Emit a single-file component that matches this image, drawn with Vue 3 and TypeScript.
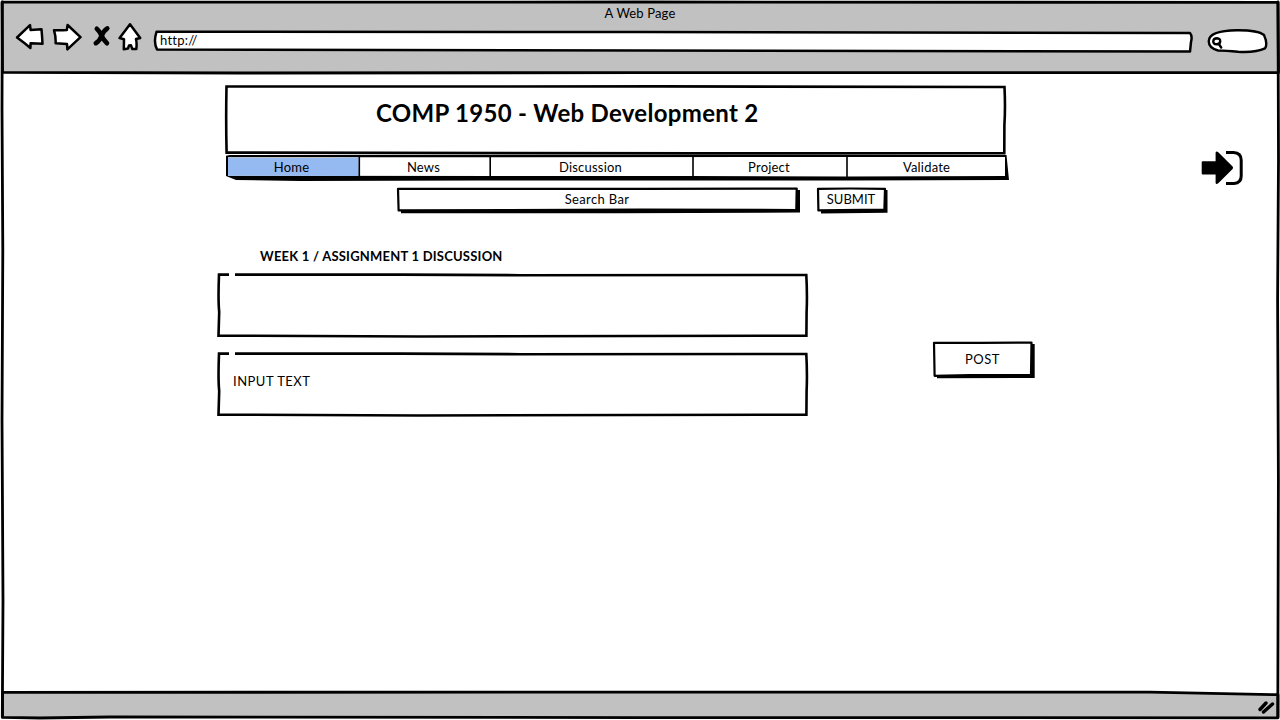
<script setup lang="ts">
interface Tab {
  label: string
  width: number
  active?: boolean
}

const tabs: Tab[] = [
  { label: 'Home', width: 133, active: true },
  { label: 'News', width: 131 },
  { label: 'Discussion', width: 203 },
  { label: 'Project', width: 154 },
  { label: 'Validate', width: 161 },
]

const posts: string[] = ['', 'INPUT TEXT']
</script>

<template>
  <div class="window">
    <header class="chrome">
      <svg class="sketch" viewBox="0 0 1280 74">
        <path d="M2 2.2 L640 2 L1278 2.4 L1278.5 72.6 L640 72.6 L240 73 L2.5 72.3 Z" class="gray" />
      </svg>
      <div class="title">A Web Page</div>
      <div class="toolbar">
        <svg class="icon back" width="30" height="28" viewBox="15 23 30 28">
          <path d="M17 37.5 L30 25.2 L30.6 30 L41.5 29.3 Q42.2 37 42.5 43.8 L30.6 43.2 L30.4 48 Q24 42.5 17 37.5 Z" />
        </svg>
        <svg class="icon forward" width="30" height="28" viewBox="52 23 30 28">
          <path d="M54 30.2 Q60 30.6 66.8 30 L67.6 25 L80.5 37.2 L67.4 49.3 L67 44 L55.6 43.3 Q56 37 54 30.2 Z" />
        </svg>
        <svg class="icon stop" width="20" height="28" viewBox="92 23 20 28">
          <path d="M96.8 28.7 Q99.5 31 101.5 35.5 Q103.5 40 107 43.2 M107.3 28.4 Q103 31.5 101.5 36 Q100 40.5 95.8 43.2" />
        </svg>
        <svg class="icon home" width="26" height="28" viewBox="117 23 26 28">
          <path d="M130 24.3 L140.2 38 L136 39 Q137 43 136.3 49 L132.3 49 L131 45.3 L129 45.5 L128 48.6 L123.8 49.2 L124 39.2 L119.6 38 Q125 31 130 24.3 Z" />
        </svg>
        <div class="address">
          <svg class="sketch" viewBox="153 29 1041 25">
            <path d="M156.5 31.8 L640 32 L1190 33 Q1192.6 36 1191 42 L1190 51.6 L640 50.6 L157 49.4 Q153.2 42 156.5 31.8 Z" />
          </svg>
          <span>http://</span>
        </div>
        <svg class="finder" width="62" height="26" viewBox="1206 28 62 26">
          <path d="M1208.8 41 Q1209 30.6 1237 30.2 Q1258 30 1264 35 Q1268 44 1265 48.4 Q1256 52.8 1238 51.8 Q1226 50.6 1218 50.5 Q1208.4 48 1208.8 41 Z" />
          <path d="M1213.3 41 Q1213.5 38.3 1217 38.2 Q1220.4 38.4 1220.2 41.5 Q1219.8 44.4 1216.6 44.3 Q1213 44 1213.3 41 Z M1218.8 44 L1221.2 47.5" />
        </svg>
      </div>
    </header>

    <main class="canvas">
      <section class="page">
        <div class="banner">
          <svg class="sketch" viewBox="225 85 783 70">
            <path class="thick" d="M226.5 86.5 L660 86.4 L1004.5 87 Q1005.5 108 1004.4 125 L1004.3 153.2 L700 153.4 L226.6 152.6 Q225.8 120 226.5 86.5 Z" />
          </svg>
          <h1>COMP 1950 - Web Development 2</h1>
        </div>

        <nav class="tabs">
          <svg class="sketch" viewBox="226 155 782 26">
            <path class="solid" d="M226 155.8 L230 155 L1006.5 155 L1009 180 L847 180.6 L690 180.4 L480 180.4 L300 181 L236 180 L226 176 Z" />
            <path class="paper" d="M228 157.2 L1005 157 L1005 176 L847 176.4 L690 176 L228 175.8 Z" />
            <path class="blue" d="M228 157.5 Q290 158.5 358.5 157.5 L359 176 L228 175.8 Z" />
            <path class="divider" d="M359.3 156 V179 M490.2 156 V179 M693 156 V179 M847 156 V179" />
          </svg>
          <a v-for="tab in tabs" :key="tab.label" :class="{ active: tab.active }" :style="{ width: tab.width + 'px' }">
            {{ tab.label }}
          </a>
        </nav>

        <div class="search">
          <div class="field">
            <svg class="sketch" viewBox="397 188 403 26">
              <path class="solid" d="M401 190 H800 V212.6 L620 213.3 L401 213.2 Z" />
              <path d="M398 188.8 L640 188.8 L796.7 188.6 L796.3 210 L640 209.6 L398.6 210.4 Z" />
            </svg>
            <span>Search Bar</span>
          </div>
          <div class="submit">
            <svg class="sketch" viewBox="817 188 71 26">
              <path class="solid" d="M821 190 H887.5 V212.8 L821 213.4 Z" />
              <path d="M818 188.8 L850 188.5 L885 188.8 L884.4 209.7 L818.4 210.4 Z" />
            </svg>
            <span>SUBMIT</span>
          </div>
        </div>

        <div class="thread">
          <div class="column">
            <h2>WEEK 1 / ASSIGNMENT 1 DISCUSSION</h2>
            <div v-for="(text, i) in posts" :key="i" class="post">
              <svg class="sketch" viewBox="217 273 591 65">
                <path class="thick" d="M229 274.6 H219 Q218 300 219.2 312 L218.5 335.6 L420 336.5 L806.4 335.6 L806.6 312 Q807.4 295 806.3 275 L520 275.2 L400 274.6 H235" />
              </svg>
              <span>{{ text }}</span>
            </div>
          </div>
          <div class="publish">
            <svg class="sketch" viewBox="933 342 102 37">
              <path class="solid" d="M937 344 H1034.7 V378 L937 378.3 Z" />
              <path d="M934 342.8 L980 342.8 L1031.5 342.5 L1031 375 L970 375 L934.6 375.8 Z" />
            </svg>
            <span>POST</span>
          </div>
        </div>
      </section>

      <svg class="login" width="44" height="38" viewBox="1200 149 44 38">
        <path d="M1202.8 161.2 H1215.6 V152.6 Q1216.3 151 1218 152 L1232.6 166.5 Q1233.6 167.8 1232.6 169 L1218 183.6 Q1216 184.8 1215.6 183 V174.6 H1202.8 Q1201.7 174.6 1201.7 173.5 V162.3 Q1201.7 161.2 1202.8 161.2 Z" />
        <path class="bracket" d="M1226 152.5 H1233.5 Q1241.2 153 1241.2 160 V176 Q1241.2 183 1234 183.5 H1226" />
      </svg>
    </main>

    <footer class="status">
      <svg class="sketch" viewBox="0 690 1280 30">
        <path class="gray" d="M2.5 692.3 L640 692.2 L1150 692.2 L1278 694.7 V717.8 L640 717.6 L110 717 L40 718 L2.5 717.4 Z" />
        <path class="grip" d="M1260 709.5 L1266 703 M1263.5 712 L1272.5 704" />
      </svg>
    </footer>

    <svg class="sketch edges" viewBox="0 0 1280 720">
      <path d="M2.3 2 L2 110 L2.8 250 L2 420 L3 600 L2.3 717 M1278 2 L1278.5 160 L1277.6 300 L1278.4 480 L1277.8 717" />
    </svg>
  </div>
</template>

<style>
body {
  background: #fff;
  overflow: hidden;
}
</style>

<style scoped>
.window {
  position: relative;
  display: flex;
  flex-direction: column;
  width: 1280px;
  height: 720px;
  background: #fff;
  color: #000;
  font: 13px/16px Lato, "Noto Sans", sans-serif;
}

svg path {
  fill: #fff;
  stroke: #000;
  stroke-width: 2.2;
  stroke-linejoin: round;
  stroke-linecap: round;
}

.sketch {
  position: absolute;
  inset: 0;
  width: 100%;
  height: 100%;
  overflow: visible;
}

svg .gray { fill: #c1c1c1; stroke-width: 2.8; }
svg .thick { stroke-width: 2.6; stroke-linecap: butt; stroke-linejoin: miter; }
svg .solid { fill: #000; stroke: none; }
svg .paper { stroke: none; }
svg .blue { fill: #95baf1; stroke: none; }
svg .divider { stroke-width: 1.6; stroke-linecap: butt; }
svg .grip { stroke-width: 3.4; }
.edges path { fill: none; stroke-width: 2.8; }
.edges { pointer-events: none; }
.icon path { stroke-width: 2.5; }

span, a, h1, h2, .title { position: relative; white-space: nowrap; }

.chrome { position: relative; height: 74px; }
.title { padding-top: 5px; text-align: center; letter-spacing: 0.15px; }
.toolbar { display: flex; align-items: flex-start; position: relative; padding: 2px 12px 0 15px; }
.forward { margin-left: 7px; }
.stop { margin-left: 10px; }
.stop path { fill: none; stroke-width: 4.6; }
.home { margin-left: 5px; }
.address { position: relative; width: 1041px; height: 25px; margin: 6px 0 0 10px; }
.address path { stroke-width: 2.5; }
.address span { display: block; padding: 3px 0 0 7px; letter-spacing: 0.25px; }
.finder { margin: 5px 0 0 12px; }
.finder path { stroke-width: 2.4; }

.canvas { display: flex; justify-content: space-between; height: 616px; }
.page { width: 827px; padding: 11px 0 0 217px; }
.banner { position: relative; width: 783px; height: 70px; margin-left: 8px; }
h1 { margin: 0; padding: 13px 0 0 151px; font-size: 24px; line-height: 30px; font-weight: 700; letter-spacing: 0.3px; }

.tabs { position: relative; display: flex; width: 782px; height: 26px; margin-left: 9px; }
.tabs a { padding: 4px 2px 0 0; text-align: center; letter-spacing: 0.2px; box-sizing: border-box; }

.search { display: flex; gap: 17px; margin: 7px 0 0 180px; }
.field, .submit { position: relative; height: 26px; text-align: center; line-height: 22px; }
.field { width: 403px; padding-right: 3px; box-sizing: border-box; letter-spacing: 0.35px; }
.submit { width: 71px; padding-right: 3px; box-sizing: border-box; }

.thread { display: flex; gap: 125px; }
.column { width: 591px; padding-top: 34px; }
h2 { margin: 0 0 8px; padding-left: 43px; font-size: 13px; line-height: 17px; font-weight: 700; letter-spacing: 0.22px; }
.post { position: relative; height: 65px; margin-bottom: 14px; }
.post span { display: block; padding: 21px 0 0 16px; letter-spacing: 0.5px; }
.publish { position: relative; width: 102px; height: 37px; margin-top: 128px; padding-right: 3px; box-sizing: border-box; text-align: center; line-height: 34px; letter-spacing: 0.5px; }

.login { margin: 75px 36px 0 0; }
.login path { fill: #000; stroke: none; }
.login .bracket { fill: none; stroke: #000; stroke-width: 3; stroke-linecap: butt; }

.status { position: relative; height: 30px; }
</style>
